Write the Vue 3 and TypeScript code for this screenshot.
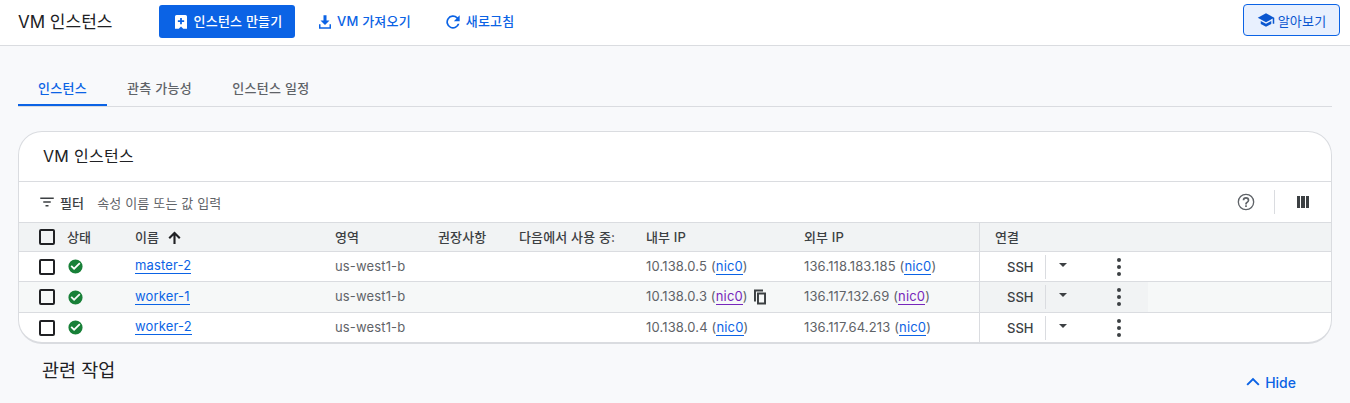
<script setup lang="ts">
interface Row {
  name: string
  internal: string
  external: string
  hover?: boolean
}

const rows: Row[] = [
  { name: 'master-2', internal: '10.138.0.5', external: '136.118.183.185' },
  { name: 'worker-1', internal: '10.138.0.3', external: '136.117.132.69', hover: true },
  { name: 'worker-2', internal: '10.138.0.4', external: '136.117.64.213' },
]

const tabs = ['인스턴스', '관측 가능성', '인스턴스 일정']
</script>

<template>
  <div class="page">
    <header class="topbar">
      <h1 class="page-title">VM 인스턴스</h1>
      <button class="btn primary">
        <svg width="18" height="18" viewBox="0 0 24 24"><path fill="#fff" fill-rule="evenodd" d="M6 2.5h12a2 2 0 0 1 2 2V21h-5l-3-3-3 3H4V4.5a2 2 0 0 1 2-2zM10.8 6.5v3h-3v2.4h3v3h2.4v-3h3V9.5h-3v-3z" /></svg>
        <span>인스턴스 만들기</span>
      </button>
      <button class="btn text import">
        <svg width="18" height="18" viewBox="0 0 24 24"><path fill="#0b63e5" d="M10 3h4v7h4l-6 6-6-6h4zM4 15h2v4h12v-4h2v6H4z" /></svg>
        <span>VM 가져오기</span>
      </button>
      <button class="btn text">
        <svg width="20" height="20" viewBox="0 0 24 24"><path fill="#0b63e5" d="M17.65 6.35A8 8 0 1 0 19.73 14h-2.08a6 6 0 1 1-1.41-6.24L13 11h7V4z" /></svg>
        <span>새로고침</span>
      </button>
      <button class="btn learn">
        <svg width="18" height="18" viewBox="0 0 24 24"><path fill="#0b57d0" d="M5 13.18v4L12 21l7-3.82v-4L12 17zM12 3 1 9l11 6 9-4.91V17h2V9z" /></svg>
        <span>알아보기</span>
      </button>
    </header>

    <main class="content">
      <nav class="tabs">
        <div v-for="(tab, i) in tabs" :key="tab" class="tab" :class="{ active: i === 0 }">{{ tab }}</div>
      </nav>

      <section class="card">
        <h2 class="card-title">VM 인스턴스</h2>

        <div class="filter">
          <svg width="18" height="18" viewBox="0 0 24 24"><path fill="#3c4043" d="M3 6h18v2H3zm4 5h10v2H7zm3 5h4v2h-4z" /></svg>
          <span class="filter-label">필터</span>
          <span class="filter-hint">속성 이름 또는 값 입력</span>
          <span class="spacer"></span>
          <svg class="help" width="20" height="20" viewBox="0 0 24 24"><path fill="#5f6368" d="M12 2a10 10 0 1 0 0 20 10 10 0 0 0 0-20zm0 18.4a8.4 8.4 0 1 1 0-16.8 8.4 8.4 0 0 1 0 16.8zM11 16h2v2h-2zm1-10a4 4 0 0 0-4 4h2a2 2 0 1 1 4 0c0 2-3 1.75-3 5h2c0-2.25 3-2.5 3-5a4 4 0 0 0-4-4z" /></svg>
          <span class="vline"></span>
          <svg class="cols" width="18" height="18" viewBox="0 0 18 18"><path fill="#3c4043" d="M3 3h3v12H3zm4 0h4v12H7zm5 0h3v12h-3z" /></svg>
        </div>

        <div class="grid head">
          <div class="cell check"><span class="box"></span></div>
          <div class="cell label">상태</div>
          <div class="cell label">
            <span>이름</span>
            <svg class="sort" width="17" height="17" viewBox="0 0 24 24"><path fill="#202124" d="M3.5 12l2.1 2.1 4.9-4.9V21h3V9.2l4.9 4.9 2.1-2.1L12 3.5z" /></svg>
          </div>
          <div class="cell label">영역</div>
          <div class="cell label">권장사항</div>
          <div class="cell label">다음에서 사용 중:</div>
          <div class="cell label">내부 IP</div>
          <div class="cell label">외부 IP</div>
          <div class="cell label conn">연결</div>
        </div>

        <div v-for="row in rows" :key="row.name" class="grid row" :class="{ hover: row.hover }">
          <div class="cell check"><span class="box"></span></div>
          <div class="cell">
            <svg width="17" height="17" viewBox="0 0 24 24"><path fill="#188038" d="M12 2a10 10 0 1 0 0 20 10 10 0 0 0 0-20zm-2 15-5-5 1.8-1.8L10 13.4l7.2-7.2L19 8z" /></svg>
          </div>
          <div class="cell label"><a class="link">{{ row.name }}</a></div>
          <div class="cell label muted">us-west1-b</div>
          <div class="cell"></div>
          <div class="cell"></div>
          <div class="cell label muted">
            <span>{{ row.internal }} (<a class="link" :class="{ visited: row.hover }">nic0</a>)</span>
            <svg v-if="row.hover" class="copy" width="18" height="18" viewBox="0 0 24 24"><path fill="#3c4043" fill-rule="evenodd" d="M4 2h12v2.6H6.6V18H4zm4 4h12v16H8zm2.6 2.6v10.8h6.8V8.6z" /></svg>
          </div>
          <div class="cell label muted">
            <span>{{ row.external }} (<a class="link" :class="{ visited: row.hover }">nic0</a>)</span>
          </div>
          <div class="cell conn actions">
            <div class="conn-inner">
              <span class="ssh">SSH</span>
              <span class="ssh-line"></span>
              <span class="caret"></span>
              <span class="dots"><i></i><i></i><i></i></span>
            </div>
          </div>
        </div>
      </section>

      <div class="related">
        <h2 class="related-title">관련 작업</h2>
        <button class="hide">
          <svg width="20" height="20" viewBox="0 0 24 24"><path fill="none" stroke="#0b63e5" stroke-width="2.4" d="M5 15.5 12 8.5l7 7" /></svg>
          <span>Hide</span>
        </button>
      </div>
    </main>
  </div>
</template>

<style>
html,
body {
  margin: 0;
  height: 100%;
  overflow: hidden;
  background: #f8f9fb;
}
</style>

<style scoped>
.page {
  width: 1350px;
  height: 403px;
  overflow: hidden;
  background: #f8f9fb;
  color: #202124;
  font-family: Inter, 'Noto Sans CJK KR', sans-serif;
  font-size: 13px;
  letter-spacing: 0.15px;
}

.topbar {
  height: 43px;
  display: flex;
  align-items: center;
  background: #fff;
  border-bottom: 1px solid #dadce0;
  padding: 0 10px 2px 18px;
}

.page-title {
  width: 141px;
  margin: 0;
  font-size: 17px;
  font-weight: 400;
  letter-spacing: 0;
  color: #202124;
  position: relative;
  top: -1px;
}

.btn {
  display: flex;
  align-items: center;
  gap: 3px;
  height: 33px;
  border: 0;
  border-radius: 3px;
  font-family: inherit;
  font-size: 13px;
  font-weight: 500;
  letter-spacing: 0.2px;
  background: transparent;
  padding: 0;
}

.primary span,
.text span {
  padding-bottom: 2px;
}

.primary {
  width: 136px;
  gap: 4px;
  justify-content: center;
  background: #0b63e5;
  color: #fff;
  margin-right: 21px;
}

.text {
  color: #0b63e5;
}

.import {
  margin-right: 32px;
}

.learn {
  margin-left: auto;
  margin-top: -3px;
  width: 97px;
  height: 32px;
  justify-content: center;
  box-sizing: border-box;
  background: #e8f0fe;
  border: 1px solid #0b63e5;
  color: #0b57d0;
  font-weight: 400;
  border-radius: 4px;
}

.content {
  padding: 0 18px;
}

.tabs {
  display: flex;
  margin-top: 25px;
  height: 35px;
  border-bottom: 1px solid #dadce0;
}

.tab {
  padding: 8px 20px 0;
  line-height: 18px;
  color: #5f6368;
  font-weight: 500;
  letter-spacing: 0.3px;
  box-sizing: border-box;
  height: 35px;
}

.tab.active {
  color: #0b63e5;
  border-bottom: 2px solid #0b63e5;
}

.card {
  margin-top: 24px;
  background: #fff;
  border: 1px solid #dadce0;
  border-bottom-width: 2px;
  border-radius: 24px;
  overflow: hidden;
}

.card-title {
  margin: 0;
  height: 49px;
  line-height: 49px;
  padding-left: 24px;
  font-size: 16px;
  font-weight: 400;
  letter-spacing: 0.3px;
  color: #202124;
  border-bottom: 1px solid #dadce0;
}

.filter {
  height: 40px;
  display: flex;
  align-items: center;
  padding-left: 19px;
  border-bottom: 1px solid #dadce0;
}

.filter-label {
  margin-left: 4px;
  font-weight: 500;
  color: #3c4043;
}

.filter-hint {
  margin-left: 13px;
  color: #5f6368;
}

.spacer {
  flex: 1;
}

.help {
  margin-right: 18px;
}

.vline {
  width: 1px;
  height: 24px;
  background: #dadce0;
  margin-right: 19px;
}

.cols {
  margin-right: 19px;
}

.grid {
  display: grid;
  grid-template-columns: 48px 68px 200px 103px 81px 127px 158px 175px 1fr;
}

.head {
  height: 28px;
  background: #f1f3f4;
  border-bottom: 1px solid #dadce0;
  font-weight: 500;
  color: #3c4043;
}

.row {
  height: 29px;
  border-bottom: 1px solid #dadce0;
  color: #3c4043;
}

.row:last-child {
  border-bottom: 0;
}

.row.hover {
  background: #f6f8f8;
  height: 30px;
}

.cell {
  display: flex;
  align-items: center;
  white-space: pre;
  min-width: 0;
}

.label {
  padding-bottom: 2px;
}

.check {
  padding-left: 20px;
}

.box {
  width: 12px;
  height: 12px;
  border: 2px solid #202124;
  border-radius: 2px;
}

.sort {
  margin-left: 7px;
  margin-top: 2px;
}

.muted {
  color: #5f6368;
}

.link {
  color: #0b63e5;
  border-bottom: 1px solid #0b63e5;
}

.link.visited {
  color: #7627bb;
  border-bottom-color: #7627bb;
}

.copy {
  margin-left: 3px;
  margin-top: 2px;
}

.conn {
  border-left: 1px solid #dadce0;
  padding-left: 15px;
}

.actions {
  padding-left: 0;
  align-items: stretch;
}

.conn-inner {
  width: 168px;
  display: flex;
  align-items: center;
  padding-left: 27px;
  box-sizing: border-box;
}

.hover .conn-inner {
  background: #f1f3f4;
}

.ssh {
  font-weight: 500;
  letter-spacing: 0;
  color: #3c4043;
}

.ssh-line {
  width: 1px;
  height: 24px;
  background: #dadce0;
  margin-left: 12px;
}

.caret {
  width: 0;
  height: 0;
  border-left: 4.5px solid transparent;
  border-right: 4.5px solid transparent;
  border-top: 4.5px solid #3c4043;
  margin-left: 13px;
  position: relative;
  top: -2px;
}

.dots {
  display: flex;
  flex-direction: column;
  gap: 3px;
  margin-left: 50px;
}

.dots i {
  display: block;
  width: 4px;
  height: 4px;
  border-radius: 50%;
  background: #3c4043;
}

.related {
  display: flex;
  align-items: flex-start;
  justify-content: space-between;
  padding: 13px 36px 0 24px;
}

.related-title {
  margin: 0;
  font-size: 18.5px;
  line-height: 26px;
  font-weight: 400;
  letter-spacing: 0;
  color: #202124;
}

.hide {
  display: flex;
  align-items: center;
  gap: 2px;
  margin-top: 15px;
  border: 0;
  background: transparent;
  padding: 0;
  color: #0b63e5;
  font-family: inherit;
  font-size: 14px;
  font-weight: 500;
}
</style>
